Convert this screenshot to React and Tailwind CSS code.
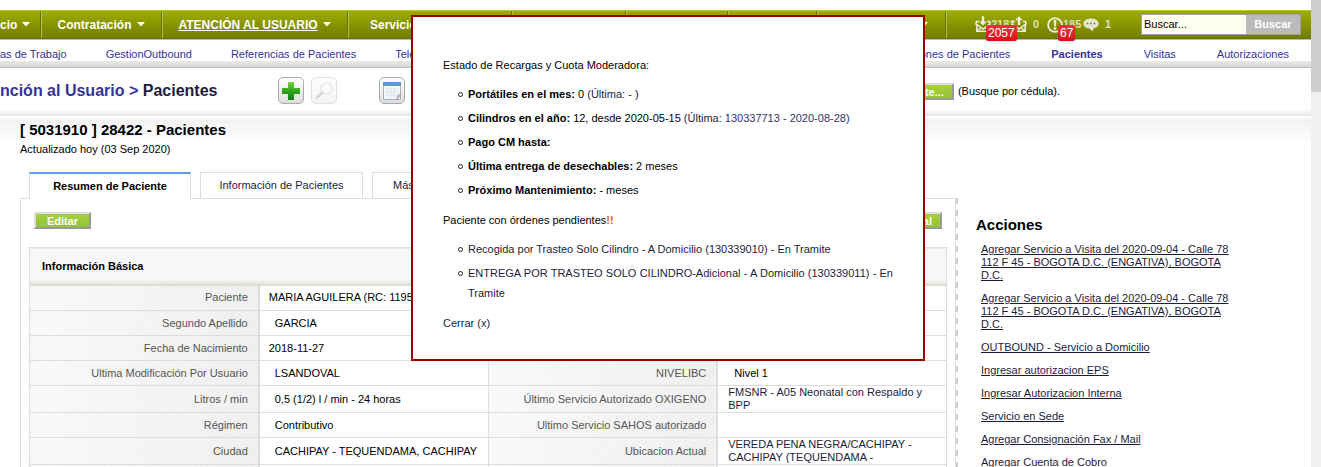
import React from 'react';

const basicInfo = [
    { label: 'Paciente', value: 'MARIA AGUILERA (RC: 11954', height: 'h-[25px]', flush: true },
    { label: 'Segundo Apellido', value: 'GARCIA', height: 'h-[25px]' },
    { label: 'Fecha de Nacimiento', value: '2018-11-27', height: 'h-[25px]', flush: true },
    { label: 'Ultima Modificación Por Usuario', value: 'LSANDOVAL', height: 'h-[25px]', label2: 'NIVELIBC', value2: 'Nivel 1' },
    { label: 'Litros / min', value: '0,5 (1/2) l / min - 24 horas', height: 'h-[27px]', label2: 'Último Servicio Autorizado OXIGENO', value2: 'FMSNR - A05 Neonatal con Respaldo y BPP', link: true },
    { label: 'Régimen', value: 'Contributivo', height: 'h-[25px]', label2: 'Ultimo Servicio SAHOS autorizado' },
    { label: 'Ciudad', value: 'CACHIPAY - TEQUENDAMA, CACHIPAY', height: 'h-[27px]', label2: 'Ubicacion Actual', value2: 'VEREDA PENA NEGRA/CACHIPAY - CACHIPAY (TEQUENDAMA -', link: true },
    { height: 'h-[25px]' },
];

const actions = [
    'Agregar Servicio a Visita del 2020-09-04 - Calle 78 112 F 45 - BOGOTA D.C. (ENGATIVA), BOGOTA D.C.',
    'Agregar Servicio a Visita del 2020-09-04 - Calle 78 112 F 45 - BOGOTA D.C. (ENGATIVA), BOGOTA D.C.',
    'OUTBOUND - Servicio a Domicilio',
    'Ingresar autorizacion EPS',
    'Ingresar Autorizacion Interna',
    'Servicio en Sede',
    'Agregar Consignación Fax / Mail',
    'Agregar Cuenta de Cobro',
];

const Arrow = () => (
    <svg className="ml-[5px] shrink-0" width="8" height="5" viewBox="0 0 8 5">
        <path d="M0 0h8L4 4.5z" fill="#fff" />
    </svg>
);

const NavItem = ({ children, className = '' }) => (
    <div className={`flex shrink-0 items-center border-r border-[#66700a] shadow-[1px_0_0_#b3c332] ${className}`}>
        {children}
    </div>
);

const Mail = ({ up }) => (
    <svg className="shrink-0" width="16" height="17" viewBox="0 0 16 17" fill="none" stroke="#eef0dc">
        <path d="M4 5.500H1.500L.9 8l1 1v6.200h12.200V9l1-1-.6-2.500H12" strokeWidth="1.600" />
        <path d="M2 8.500l6 4.500 6-4.500M2.500 14.800l3.500-3M13.500 14.800l-3.500-3" strokeWidth="1.400" />
        {up
            ? <path d="M8 .3l3.800 4H9.200V9H6.800V4.300H4.200z" fill="#eef0dc" stroke="none" />
            : <path d="M8 9.500L4.200 5.500H6.800V.3h2.400V5.500h2.600z" fill="#eef0dc" stroke="none" />}
    </svg>
);

const Alert = () => (
    <svg className="shrink-0" width="16" height="16" viewBox="0 0 16 16">
        <circle cx="8" cy="8" r="6.900" fill="none" stroke="#eef0dc" strokeWidth="1.800" />
        <path d="M6.600 3h2.800l-.5 6.200H7.100z" fill="#eef0dc" />
        <circle cx="8" cy="11.500" r="1.400" fill="#eef0dc" />
    </svg>
);

const Bubble = () => (
    <svg className="shrink-0" width="16" height="14" viewBox="0 0 16 14">
        <path d="M8 .5c4.300 0 7.700 2.200 7.700 5 0 2.600-2.400 4.500-5.500 4.900L9.800 13.500 6.300 10.500C2.800 10.200.3 8.200.3 5.500c0-2.800 3.400-5 7.700-5z" fill="#e4e6d2" />
        <path d="M3.500 5.500h1.800M7 5.500h1.800M10.500 5.500h1.800" stroke="#7e8a05" strokeWidth="1.500" />
    </svg>
);

const Badge = ({ children }) => (
    <span className="absolute left-[11px] top-[9px] rounded-[2px] bg-gradient-to-b from-[#f5303c] to-[#d80f1b] px-[2px] text-[12px] font-normal leading-4 text-white shadow">
        {children}
    </span>
);

const GreenButton = ({ children, className = '' }) => (
    <button className={`h-[17px] border-2 border-t-[#dedede] border-l-[#dedede] border-r-[#999] border-b-[#999] bg-gradient-to-b from-[#a6d03c] to-[#93c43a] text-[11px] font-bold leading-[12px] text-white ${className}`}>
        {children}
    </button>
);

const ToolButton = ({ label, faded, children }) => (
    <button
        aria-label={label}
        className={`flex h-[27px] w-[26px] items-center justify-center rounded-[5px] border border-[#aaa] bg-gradient-to-b from-white to-[#dedede] ${faded ? 'opacity-35' : ''}`}
    >
        {children}
    </button>
);

const Item = ({ children }) => (
    <li className="before:-ml-[10px] before:mr-[5px] before:inline-block before:size-[5px] before:rounded-full before:border before:border-[#222] before:align-[1px] before:content-['']">
        {children}
    </li>
);

const labelCell = 'bg-[repeating-linear-gradient(135deg,transparent_0px,transparent_3px,#ffffff55_3px,#ffffff55_4px),linear-gradient(to_right,#f8f8f8,#eeeeee)] pr-[10px] text-right font-normal text-[#555] border-r-2 border-[#ddd]';

const InfoTable = () => (
    <table className="w-full table-fixed border-collapse border border-[#ddd] text-[11px] leading-[13px]">
        <thead>
            <tr>
                <th colSpan={4} className="h-[38px] bg-[linear-gradient(to_bottom,#f7f7f7_80%,#eeeeea_88%,#d6d6d0)] px-3 text-left font-bold">
                    Información Básica
                </th>
            </tr>
        </thead>
        <tbody>
            {basicInfo.map((row, i) => (
                <tr key={i} className={`${row.height} border-b border-[#ddd]`}>
                    <th className={labelCell}>{row.label}</th>
                    <td className={`py-0 whitespace-nowrap border-r border-[#ddd] ${row.flush ? 'pl-[9px]' : 'pl-[15px]'}`}>{row.value}</td>
                    <th className={labelCell}>{row.label2}</th>
                    <td className={row.link ? 'py-0 pl-[10px] text-[#1c1c3c]' : 'py-0 pl-4'}>{row.value2}</td>
                </tr>
            ))}
        </tbody>
    </table>
);

const Popup = () => (
    <div role="dialog" aria-label="Estado de Recargas" className="absolute left-[411px] top-[15px] w-[514px] border-2 border-[#900] bg-white px-[30px] pb-[26px] pt-[38px] text-[11px] leading-5 text-black">
        <p>Estado de Recargas y Cuota Moderadora:</p>
        <ul className="mb-[10px] mt-[9px] flex flex-col gap-1 pl-[25px]">
            <Item><b>Portátiles en el mes:</b> 0 <a href="#" className="text-[#1c1c3c]">(Última: - )</a></Item>
            <Item><b>Cilindros en el año:</b> 12, desde 2020-05-15 <a href="#" className="text-[#1c1c3c]">(Última: <span className="text-[#333366]">130337713 - 2020-08-28)</span></a></Item>
            <Item><b>Pago CM hasta:</b></Item>
            <Item><b>Última entrega de desechables:</b> 2 meses</Item>
            <Item><b>Próximo Mantenimiento:</b> - meses</Item>
        </ul>
        <p>Paciente con órdenes pendientes<b className="text-[#d06a20]">!!</b></p>
        <ul className="mb-[10px] mt-[9px] flex flex-col gap-1 pl-[25px] text-justify">
            <Item><a href="#" className="text-[#1c1c3c]">Recogida por Trasteo Solo Cilindro - A Domicilio (130339010) - En Tramite</a></Item>
            <Item><a href="#" className="text-[#1c1c3c]">ENTREGA POR TRASTEO SOLO CILINDRO-Adicional - A Domicilio (130339011) - En Tramite</a></Item>
        </ul>
        <button className="block text-[#1c1c3c]">Cerrar (x)</button>
    </div>
);

const App = () => {
    return (
        <div className="relative flex h-screen overflow-hidden bg-white font-['Liberation_Sans',Arial,sans-serif] text-[11px] text-black">
            <div className="min-w-0 flex-1 pt-[10px]">
                <nav className="flex h-[29px] border-t border-b border-t-[#b4c81e] border-b-[#6a7400] bg-gradient-to-b from-[#9dac00] to-[#737d00] text-[12px] font-bold text-white">
                    <NavItem className="w-[41px]"><a href="#">cio</a><Arrow /></NavItem>
                    <NavItem className="w-[121px] justify-center"><a href="#">Contratación</a><Arrow /></NavItem>
                    <NavItem className="w-[186px] justify-center"><a href="#" className="underline">ATENCIÓN AL USUARIO</a><Arrow /></NavItem>
                    <NavItem className="w-[164px] pl-[22px]"><a href="#">Servicio</a></NavItem>
                    <NavItem className="w-[114px]" />
                    <NavItem className="w-[102px]" />
                    <NavItem className="w-[89px]" />
                    <NavItem className="w-[129px] justify-end pr-[17px]"><Arrow /></NavItem>
                    <div className="ml-auto flex items-center pr-[10px] text-[11px] text-[#dfe2b8]">
                        <div className="relative flex items-center"><Mail /><span className="w-5 whitespace-nowrap">2181</span><Badge>2057</Badge></div>
                        <div className="flex items-center"><Mail up /><span className="ml-[6px] w-[14px]">0</span></div>
                        <div className="relative flex items-center"><Alert /><span className="w-5">185</span><Badge>67</Badge></div>
                        <div className="flex items-center"><Bubble /><span className="ml-[6px] w-9">1</span></div>
                        <form className="flex h-[21px] border border-[#a0a0a0]">
                            <input aria-label="Buscar" defaultValue="Buscar..." className="w-[104px] bg-[#fffff0] px-[2px] text-[11px] font-normal text-black outline-none" />
                            <button type="button" className="w-[54px] bg-[#bbb] text-[11px] font-bold text-white">Buscar</button>
                        </form>
                    </div>
                </nav>

                <div className="flex h-[29px] justify-between border-b border-[#bbb] bg-[linear-gradient(to_bottom,#bbbbbb_1px,#ffffff_1px,#ffffff_22px,#e9e9e5_22px,#d8d8d4)] pr-[22px] pt-[7px] leading-4 text-[#333399]">
                    <div className="flex gap-[39px] whitespace-nowrap">
                        <a href="#">as de Trabajo</a>
                        <a href="#">GestionOutbound</a>
                        <a href="#">Referencias de Pacientes</a>
                        <a href="#">Telé</a>
                    </div>
                    <div className="flex gap-[41px] whitespace-nowrap">
                        <a href="#">ones de Pacientes</a>
                        <a href="#" className="font-bold">Pacientes</a>
                        <a href="#">Visitas</a>
                        <a href="#">Autorizaciones</a>
                    </div>
                </div>

                <div className="flex h-12 items-start bg-[linear-gradient(to_bottom,#ffffff_85%,#e8e8e8)] pt-[9px]">
                    <h1 className="mr-[61px] text-[16px] font-bold leading-[27px] text-[#1c1c3c]">
                        <a href="#" className="text-[#333399]">nción al Usuario &gt;</a> Pacientes
                    </h1>
                    <div className="flex gap-[7px]">
                        <ToolButton label="Crear">
                            <svg width="20" height="20" viewBox="0 0 20 20">
                                <defs>
                                    <linearGradient id="plus" x1="0" y1="0" x2="0" y2="1">
                                        <stop offset="0" stopColor="#7fd14a" />
                                        <stop offset=".5" stopColor="#2fa51c" />
                                        <stop offset="1" stopColor="#0f7f0a" />
                                    </linearGradient>
                                </defs>
                                <path d="M7 1h6v6h6v6h-6v6H7v-6H1V7h6z" fill="url(#plus)" />
                            </svg>
                        </ToolButton>
                        <ToolButton label="Buscar" faded>
                            <svg width="20" height="20" viewBox="0 0 20 20" fill="none" stroke="#888">
                                <circle cx="12.500" cy="7.500" r="5.500" strokeWidth="1.200" fill="#f8f8f8" stroke="#aaa" />
                                <path d="M8.500 11.500L2 17.500" strokeWidth="2.600" />
                            </svg>
                        </ToolButton>
                    </div>
                    <div className="ml-[42px]">
                        <ToolButton label="Calendario">
                            <svg width="20" height="20" viewBox="0 0 20 20">
                                <path d="M1.500 1.500h17v17h-17z" fill="#f6f9fc" stroke="#a5afba" />
                                <path d="M1 1h18v4H1z" fill="#5b9bdc" />
                                <path d="M3 8h13M3 11h13M3 14h11M6 6v11M9 6v11M12 6v11" stroke="#dde4ec" />
                                <path d="M18.500 14c-2-1-4 0-3.500 4.500z" fill="#e5e5e5" stroke="#999" />
                            </svg>
                        </ToolButton>
                    </div>
                    <div className="ml-auto mr-[251px] flex items-center gap-1 pt-[6px]">
                        <GreenButton className="w-[90px] pr-2 text-right">te...</GreenButton>
                        <span>(Busque por cédula).</span>
                    </div>
                </div>

                <header className="bg-[linear-gradient(to_bottom,#ffffff_2px,#f2f2f2_3px,#ffffff_30px)] pl-5 pt-[6px]">
                    <h2 className="text-[15px] font-bold leading-4">[ 5031910 ] 28422 - Pacientes</h2>
                    <p className="mt-[3px] leading-4">Actualizado hoy (03 Sep 2020)</p>
                </header>

                <div className="flex pl-5 pt-[15px]">
                    <main className="min-w-0 flex-1">
                        <div className="flex h-[27px] gap-[9px] pl-[9px] leading-[25px]">
                            <button className="relative -mb-px h-[27px] w-[162px] border border-b-0 border-t-2 border-[#ddd] border-t-[#5f9fe0] bg-white font-bold">Resumen de Paciente</button>
                            <button className="h-[26px] w-[163px] border border-b-0 border-[#ddd] text-[#1c1c3c]">Información de Pacientes</button>
                            <button className="h-[26px] w-[120px] border border-b-0 border-[#ddd] px-5 text-left text-[#1c1c3c]">Más</button>
                        </div>
                        <section className="-mt-px border border-[#ddd] px-[8px] pt-[13px]">
                            <div className="mb-[18px] flex justify-between px-[5px]">
                                <GreenButton className="w-[57px]">Editar</GreenButton>
                                <GreenButton className="w-[70px] pr-2 text-right">al</GreenButton>
                            </div>
                            <InfoTable />
                        </section>
                    </main>
                    <aside className="mt-[26px] flex w-[355px] shrink-0">
                        <div className="w-[2px] bg-[repeating-linear-gradient(to_bottom,#cccccc_0px,#cccccc_6px,#ffffff_6px,#ffffff_12px)]" />
                        <div className="flex-1 pl-[18px] pr-20 pt-[18px]">
                            <h3 className="text-[15px] font-bold leading-[18px]">Acciones</h3>
                            <ul className="mt-[9px] flex flex-col gap-[10px] pl-[5px] leading-[13px]">
                                {actions.map((action, i) => (
                                    <li key={i}><a href="#" className="text-[#1c1c3c] underline">{action}</a></li>
                                ))}
                            </ul>
                        </div>
                    </aside>
                </div>
            </div>

            <div className="w-[10px] shrink-0 bg-[#f0f0f0]">
                <div className="h-[92px] bg-[#cdcdcd]" />
            </div>

            <Popup />
        </div>
    );
};

export default App;
